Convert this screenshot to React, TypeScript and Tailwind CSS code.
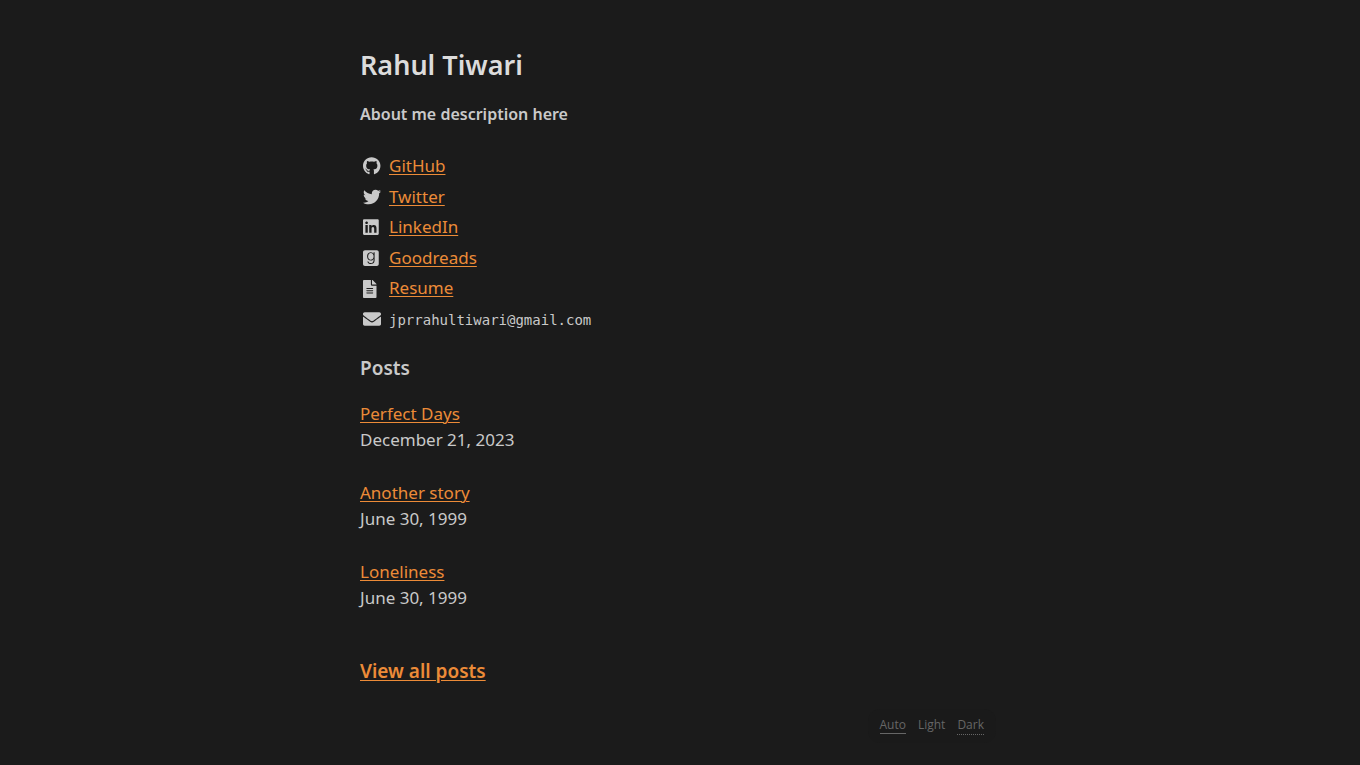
import { FaEnvelope, FaFileAlt, FaGithub, FaGoodreads, FaLinkedin, FaTwitter } from "react-icons/fa";
import type { IconType } from "react-icons";

const profiles: { label: string; icon: IconType }[] = [
  { label: "GitHub", icon: FaGithub },
  { label: "Twitter", icon: FaTwitter },
  { label: "LinkedIn", icon: FaLinkedin },
  { label: "Goodreads", icon: FaGoodreads },
  { label: "Resume", icon: FaFileAlt },
];

const posts = [
  { title: "Perfect Days", date: "December 21, 2023" },
  { title: "Another story", date: "June 30, 1999" },
  { title: "Loneliness", date: "June 30, 1999" },
];

const link = "text-[#ec8b38] underline underline-offset-2 decoration-1";

function RowIcon({ icon: Icon }: { icon: IconType }) {
  return (
    <Icon
      preserveAspectRatio="xMinYMid meet"
      className="ml-[3px] mr-2 h-[18px] w-[18px] shrink-0"
      aria-hidden="true"
    />
  );
}

export default function App() {
  return (
    <div className="min-h-screen bg-[#1b1b1b] font-['Noto_Sans',sans-serif] text-[17px] text-[#c9c9c9]">
      <div className="mx-auto max-w-[640px] pt-11">
        <main>
          <h1 className="text-[27px] leading-[42px] font-semibold text-[#dcdcdc]">Rahul Tiwari</h1>
          <p className="mt-[14px] text-base leading-7 font-semibold">About me description here</p>

          <ul className="mt-[23px] leading-[1.8]">
            {profiles.map(({ label, icon }) => (
              <li key={label} className="flex items-center">
                <RowIcon icon={icon} />
                <a href="#" className={link}>{label}</a>
              </li>
            ))}
            <li className="flex items-center">
              <RowIcon icon={FaEnvelope} />
              <span className="pt-0.5 font-['DejaVu_Sans_Mono',monospace] text-sm leading-7">jprrahultiwari@gmail.com</span>
            </li>
          </ul>

          <h2 className="mt-5 text-[19px] leading-7 font-semibold">Posts</h2>
          <ul className="mt-[19px] flex flex-col gap-[27px] leading-[26px]">
            {posts.map((post) => (
              <li key={post.title}>
                <a href="#" className={link}>{post.title}</a>
                <p>{post.date}</p>
              </li>
            ))}
          </ul>
          <h2 className="mt-[46px] text-[19px] leading-7 font-semibold">
            <a href="#" className={link}>View all posts</a>
          </h2>
        </main>

        <footer className="mt-6 mr-1 ml-auto flex w-fit items-start gap-3 rounded-xl bg-[#1a1a1a] px-3 py-2 font-['Open_Sans',sans-serif] text-xs leading-4 font-medium text-[#666666]">
          <button type="button" className="border-b border-[#666666]">Auto</button>
          <button type="button">Light</button>
          <button type="button" className="border-b border-dotted border-[#666666] pb-px">Dark</button>
        </footer>
      </div>
    </div>
  );
}
